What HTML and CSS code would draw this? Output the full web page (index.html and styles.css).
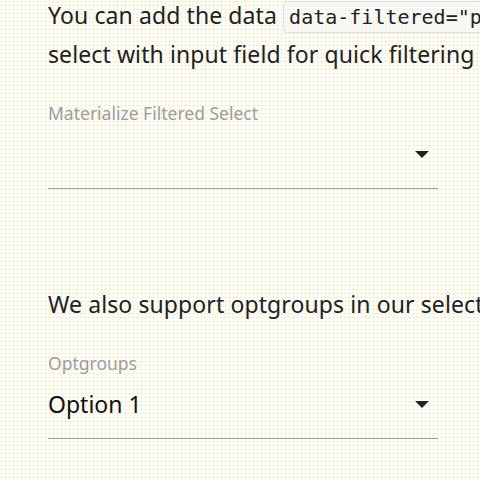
FILE: index.html
```html
<!DOCTYPE html>
<html>
<head>
<meta charset="utf-8">
<link rel="stylesheet" href="styles.css">
</head>
<body>
<div class="page">
  <p class="intro">You can add the data <code>data-filtered="polluted"</code> attribute to<br>select with input field for quick filtering of options</p>
  <div class="field first">
    <div class="label">Materialize Filtered Select</div>
    <div class="select"><span class="value"></span><span class="arrow"></span></div>
  </div>
  <p class="intro second">We also support optgroups in our select component.</p>
  <div class="field">
    <div class="label">Optgroups</div>
    <div class="select"><span class="value">Option 1</span><span class="arrow"></span></div>
  </div>
</div>
</body>
</html>
```
FILE: styles.css
```css
html, body {
  margin: 0;
  height: 100%;
  overflow: hidden;
}
body {
  background-image:
    linear-gradient(to right, transparent 1px, #fbfbfc 1px),
    linear-gradient(to bottom, transparent 1px, #fbfbfc 1px);
  background-size: 4px 4px;
  background-position: 1px 1px;
  background-color: #f6e447;
  font-family: "Noto Sans", "Open Sans", sans-serif;
  color: #222;
}
.page {
  padding-left: 48px;
  white-space: nowrap;
}
.intro {
  margin: -3px 0 0;
  font-size: 23px;
  line-height: 37px;
  letter-spacing: 0.1px;
}
code {
  font-family: "DejaVu Sans Mono", monospace;
  font-size: 20px;
  letter-spacing: 0;
  padding: 3px 5px;
  border: 1px solid #ddd;
  border-radius: 4px;
  background: rgba(245, 245, 245, 0.4);
}
.field {
  width: 390px;
}
.first {
  margin-top: 29px;
}
.label {
  font-size: 17.5px;
  line-height: 22px;
  color: #9e9e9e;
}
.select {
  display: flex;
  align-items: center;
  justify-content: space-between;
  height: 40px;
  padding-bottom: 14px;
  margin-top: 10px;
  border-bottom: 1px solid #9e9e9e;
  font-size: 23px;
  color: #111;
}
.arrow {
  width: 0;
  height: 0;
  border-left: 7.5px solid transparent;
  border-right: 7.5px solid transparent;
  border-top: 7px solid #222;
  margin-right: 9px;
}
.second {
  margin-top: 97px;
  margin-bottom: 29px;
}
```
